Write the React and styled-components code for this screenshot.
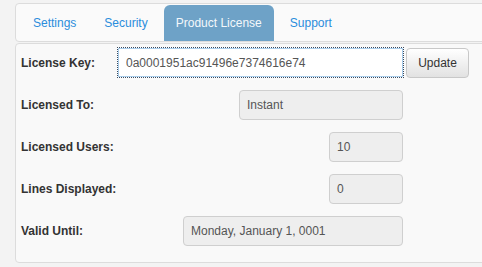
import React from 'react'
import styled, { createGlobalStyle } from 'styled-components'

const GlobalStyle = createGlobalStyle`
  html, body {
    margin: 0;
    padding: 0;
    background: #f3f3f3;
    overflow: hidden;
  }
  body {
    font-family: "Liberation Sans", Arial, sans-serif;
    font-size: 12px;
  }
`

const Page = styled.div`
  padding: 3px 0 0 15px;
  width: 520px;
`

const TabBar = styled.div`
  display: flex;
  align-items: flex-end;
  gap: 4px;
  height: 37px;
  padding: 0 0 0 5px;
  border: 1px solid #dcdcdc;
  border-radius: 4px;
  background: #fafafa;
`

const Tab = styled.div`
  display: flex;
  align-items: center;
  height: 36px;
  padding: 0 12px;
  border-radius: 6px 6px 0 0;
  color: ${p => (p.$active ? '#f4f8fb' : '#2b8ddc')};
  background: ${p => (p.$active ? '#6ea2c7' : 'transparent')};
  white-space: nowrap;
`

const Panel = styled.div`
  margin-top: 1px;
  padding: 3px 0 16px 5px;
  border: 1px solid #dcdcdc;
  border-radius: 4px;
  background: #f9f9f9;
  display: flex;
  flex-direction: column;
  gap: 12px;
`

const Row = styled.div`
  display: flex;
  align-items: center;
`

const Label = styled.div`
  width: 96px;
  font-weight: bold;
  color: #333;
  white-space: nowrap;
`

const Value = styled.div`
  width: 286px;
  display: flex;
  justify-content: flex-end;
`

const Field = styled.div`
  box-sizing: border-box;
  width: ${p => p.$width}px;
  height: 30px;
  padding: 0 7px;
  display: flex;
  align-items: center;
  border: 1px solid #cfcfcf;
  border-radius: 4px;
  background: #eeeeee;
  color: #555;
`

const KeyInput = styled.input`
  box-sizing: border-box;
  width: 287px;
  height: 31px;
  margin: 0;
  padding: 0 8px;
  border: 1px dotted #3c4a5c;
  box-shadow: inset 0 0 0 1px #a9cdeb;
  background: #fff;
  color: #555;
  font-family: "Liberation Sans", Arial, sans-serif;
  font-size: 12px;
  outline: none;
`

const Button = styled.button`
  box-sizing: border-box;
  width: 63px;
  height: 30px;
  margin-left: 2px;
  border: 1px solid #c8c8c8;
  border-radius: 4px;
  background: linear-gradient(#ffffff, #e2e2e2);
  color: #333;
  font-family: "Liberation Sans", Arial, sans-serif;
  font-size: 12px;
`

const tabs = ['Settings', 'Security', 'Product License', 'Support']

const fields = [
  { label: 'Licensed To:', value: 'Instant', width: 164 },
  { label: 'Licensed Users:', value: '10', width: 74 },
  { label: 'Lines Displayed:', value: '0', width: 74 },
  { label: 'Valid Until:', value: 'Monday, January 1, 0001', width: 220 },
]

export default function App() {
  return (
    <Page>
      <GlobalStyle />
      <TabBar>
        {tabs.map(t => (
          <Tab key={t} $active={t === 'Product License'}>{t}</Tab>
        ))}
      </TabBar>
      <Panel>
        <Row>
          <Label>License Key:</Label>
          <KeyInput defaultValue="0a0001951ac91496e7374616e74" />
          <Button>Update</Button>
        </Row>
        {fields.map(f => (
          <Row key={f.label}>
            <Label>{f.label}</Label>
            <Value>
              <Field $width={f.width}>{f.value}</Field>
            </Value>
          </Row>
        ))}
      </Panel>
    </Page>
  )
}
